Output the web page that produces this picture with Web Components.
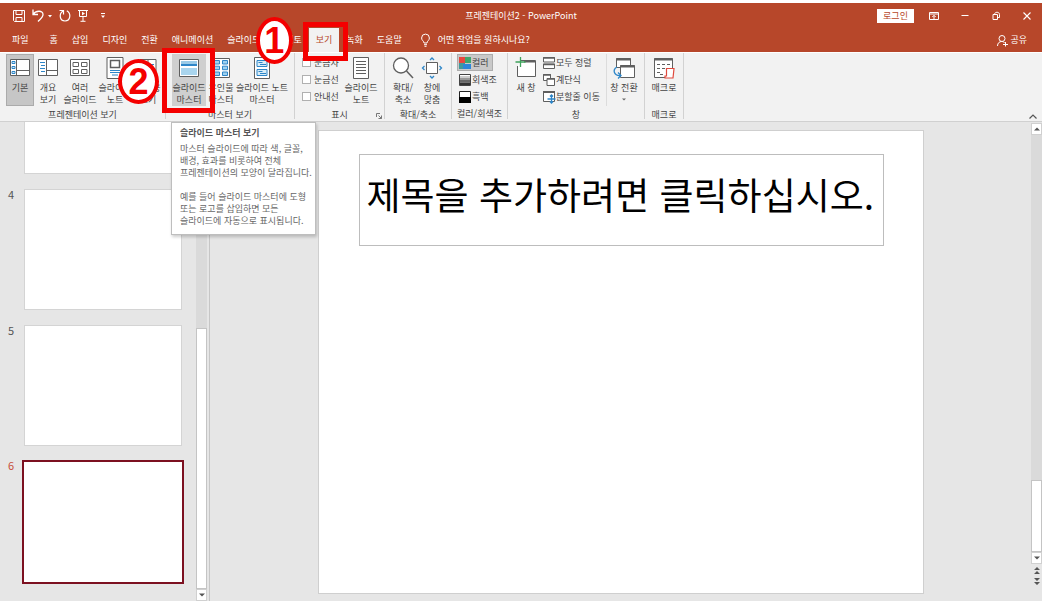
<!DOCTYPE html>
<html lang="ko">
<head>
<meta charset="utf-8">
<title>프레젠테이션2 - PowerPoint</title>
<style>
  html, body { margin: 0; height: 100%; }
  body {
    font: 9px/12px "Noto Sans CJK KR", "Noto Sans", sans-serif;
    color: #444; background: #fff;
    --brand: #b7472a; --ribbon: #f2f2f2; --canvas: #e6e6e6; --line: #c6c6c6; --mark: #f40000;
  }
</style>
</head>
<body>
<ppt-window>
  <title-bar slot="title" heading="프레젠테이션2 - PowerPoint"></title-bar>
  <tab-row slot="tabs">
    <ribbon-tab wide>파일</ribbon-tab>
    <ribbon-tab>홈</ribbon-tab>
    <ribbon-tab>삽입</ribbon-tab>
    <ribbon-tab>디자인</ribbon-tab>
    <ribbon-tab>전환</ribbon-tab>
    <ribbon-tab>애니메이션</ribbon-tab>
    <ribbon-tab>슬라이드 쇼</ribbon-tab>
    <ribbon-tab>검토</ribbon-tab>
    <ribbon-tab active>보기<step-mark slot="mark" class="one" number="1"></step-mark></ribbon-tab>
    <ribbon-tab>녹화</ribbon-tab>
    <ribbon-tab>도움말</ribbon-tab>
  </tab-row>

  <ribbon-bar slot="ribbon">
    <ribbon-group label="프레젠테이션 보기" style="--pad: 0 1px 0 6px">
      <big-button icon="normal" active style="--w:28px">기본</big-button>
      <big-button icon="outline" style="--w:28px">개요<br>보기</big-button>
      <big-button icon="sorter" style="--w:36px">여러<br>슬라이드</big-button>
      <big-button icon="notes" style="--w:34px">슬라이드<br>노트</big-button>
      <big-button icon="reading" style="--w:32px">읽기용<br>보기</big-button>
    </ribbon-group>
    <ribbon-group label="마스터 보기" style="--pad: 0 6px">
      <big-button icon="master" hover style="--w:34px">슬라이드<br>마스터
        <step-mark slot="over" class="two" number="2"></step-mark>
        <hover-tip slot="over" heading="슬라이드 마스터 보기">
          <span>마스터 슬라이드에 따라 색, 글꼴,<br>배경, 효과를 비롯하여 전체<br>프레젠테이션의 모양이 달라집니다.</span>
          <span slot="more">예를 들어 슬라이드 마스터에 도형<br>또는 로고를 삽입하면 모든<br>슬라이드에 자동으로 표시됩니다.</span>
        </hover-tip>
      </big-button>
      <big-button icon="handout" style="--w:30px">유인물<br>마스터</big-button>
      <big-button icon="notesmaster" style="--w:52px">슬라이드 노트<br>마스터</big-button>
    </ribbon-group>
    <ribbon-group label="표시" launcher style="--pad: 0 5px 0 7px">
      <stack-col style="--w:41px">
        <check-item>눈금자</check-item>
        <check-item>눈금선</check-item>
        <check-item>안내선</check-item>
      </stack-col>
      <big-button icon="page" style="--w:36px">슬라이드<br>노트</big-button>
    </ribbon-group>
    <ribbon-group label="확대/축소" style="--pad: 0 5px 0 3px">
      <big-button icon="zoom" style="--w:30px">확대/<br>축소</big-button>
      <big-button icon="fit" style="--w:28px">창에<br>맞춤</big-button>
    </ribbon-group>
    <ribbon-group label="컬러/회색조" style="--pad: 0 5px">
      <stack-col style="--w:45px">
        <small-button icon="color" active>컬러</small-button>
        <small-button icon="gray">회색조</small-button>
        <small-button icon="bw">흑백</small-button>
      </stack-col>
    </ribbon-group>
    <ribbon-group label="창" style="--pad: 0 3px">
      <big-button icon="newwin" style="--w:30px">새 창</big-button>
      <stack-col divided style="--w:66px">
        <small-button icon="arrange">모두 정렬</small-button>
        <small-button icon="cascade">계단식</small-button>
        <small-button icon="split">분할줄 이동</small-button>
      </stack-col>
      <big-button icon="switch" caret style="--w:34px">창 전환</big-button>
    </ribbon-group>
    <ribbon-group label="매크로" style="--pad: 0">
      <big-button icon="macro" style="--w:38px">매크로</big-button>
    </ribbon-group>
  </ribbon-bar>

  <thumb-pane slot="pane">
    <slide-thumb number="3"></slide-thumb>
    <slide-thumb number="4"></slide-thumb>
    <slide-thumb number="5"></slide-thumb>
    <slide-thumb number="6" selected></slide-thumb>
  </thumb-pane>
  <slide-stage slot="stage">제목을 추가하려면 클릭하십시오.</slide-stage>
</ppt-window>

<script>
const G = '#5f5f5f', B = '#2e86c8';
const ICONS = {
  save: [12, 12, '<g fill="none" stroke="#fff"><path d="M.5.5h11v11H1.500L.5 10.500z"/><path d="M3 .5v4h6v-4M3 11.500v-4h6v4"/></g>'],
  undo: [12, 13, '<path d="M1 .5v5h5M1 5.500C3.500 1.500 11 .8 11 5.500c0 2.800-2.200 4.200-5 7" fill="none" stroke="#fff" stroke-width="1.300"/>'],
  redo: [12, 13, '<path d="M.5 1.500h4v4M4.500 1.700C-.5 4.500.5 12 6 12s6.500-7.500 1.800-10.300" fill="none" stroke="#fff" stroke-width="1.200"/>'],
  show: [10, 13, '<path d="M0 1.500h10M1.500 1.500v6h7v-6M5 7.500v4.500M2.500 12.300h5" fill="none" stroke="#fff"/><path d="M4 2.800l3 1.800-3 1.800z" fill="#fff"/>'],
  tiny: [4, 4, '<path d="M0 1h4L2 3.500z" fill="#fff"/>'],
  more: [4, 6, '<path d="M0 0h4v1H0zM0 2.500h4L2 5z" fill="#fff"/>'],
  display: [10, 8, '<path d="M.5.5h9v7h-9zM.5 2h9M5 7V3.500M3.300 5L5 3.300 6.700 5" fill="none" stroke="#fff"/>'],
  min: [8, 8, '<path d="M.5 3.500h7" stroke="#fff"/>'],
  restore: [8, 8, '<path d="M1 2.500h4.500v5H1zM2.500 2.500c0-3 5-3 5 0v3h-2" fill="none" stroke="#fff"/>'],
  close: [8, 8, '<path d="M.5.5l7 7M7.500.5l-7 7" stroke="#fff" stroke-width="1.100"/>'],
  bulb: [9, 13, '<path d="M3 9c0-2-2.400-2.500-2.400-5a3.900 3.900 0 0 1 7.800 0C8.400 6.500 6 7 6 9zM3 10.700h3M3.500 12.300h2" fill="none" stroke="#fff"/>'],
  person: [11, 11, '<circle cx="5" cy="3.500" r="3" fill="none" stroke="#fff"/><path d="M.5 11c0-3 2-4.500 4-4.500 1.500 0 2.500.5 3.300 1.500M6 9.500h5M8.500 7v4.500" fill="none" stroke="#fff"/>'],
  normal: [22, 20, `<path d="M1.500 1.500h19v16h-19z" fill="#fff" stroke="${G}"/><path d="M7.500 1.500v16M7.500 12.500h13" stroke="${G}"/><path d="M3 3.500h3v2H3zM3 8.500h3v2H3zM3 13.500h3v2H3z" fill="#cfe7f6" stroke="${B}"/>`],
  outline: [22, 20, `<path d="M1.500 1.500h19v16h-19z" fill="#fff" stroke="${G}"/><path d="M9.500 1.500v16M9.500 12.500h11" stroke="${G}"/><path d="M3 4.500h5M4 7.500h4M3 10.500h5M4 13.500h4" stroke="${B}"/>`],
  sorter: [22, 20, `<path d="M1.500 1.500h19v16h-19z" fill="#fff" stroke="${G}"/><path d="M4 4.500h5.500v4H4zM12.500 4.500H18v4h-5.500zM4 11.500h5.500v4H4zM12.500 11.500H18v4h-5.500z" fill="none" stroke="${G}"/>`],
  notes: [22, 22, `<path d="M3 .5h16v21H3z" fill="#fff" stroke="${G}"/><path d="M6.500 3.500h9v7h-9z" fill="none" stroke="${G}" stroke-width="1.500"/><path d="M6 13.500h10M6 15.500h10M8 18h6" stroke="${B}"/>`],
  reading: [22, 20, `<path d="M3 1.500h16v16H3z" fill="#fff" stroke="${G}"/><path d="M11 2v15" stroke="${G}"/><path d="M13 6.500h4M13 9.500h4" stroke="${B}"/>`],
  master: [22, 20, `<path d="M1.500 1.500h19v17h-19z" fill="#fff" stroke="${G}"/><path d="M3 3h16v3H3z" fill="#9bcbe8"/><path d="M3 6h16v2H3z" fill="${B}"/><path d="M3 10h16v7H3z" fill="#a9d5ee"/>`],
  handout: [18, 20, `<path d="M.5.5h17v19H.5z" fill="#fff" stroke="${G}"/><g fill="#9dd0ef" stroke="${B}"><path d="M2.500 2.500h5v3.500h-5zM10.500 2.500h5v3.500h-5zM2.500 8.200h5v3.500h-5zM10.500 8.200h5v3.500h-5zM2.500 14h5v3.500h-5zM10.500 14h5v3.500h-5z"/></g>`],
  notesmaster: [18, 22, `<path d="M1.500.5h15v21h-15z" fill="#fff" stroke="${G}"/><path d="M4 3.500h10v6H4zM4 12.500h10v6H4z" fill="#d8edf8" stroke="${B}"/><path d="M5.500 5.500h4M7 7.500h6M5.500 14.500h4M7 16.500h6" stroke="${B}"/>`],
  page: [18, 22, `<path d="M1.500.5h15v21h-15z" fill="#fff" stroke="${G}"/><path d="M4 4.500h10M4 7.500h10M4 10.500h10M4 13.500h10M4 16.500h10" stroke="${G}"/>`],
  zoom: [22, 22, `<circle cx="9" cy="8.500" r="7.500" fill="#fff" stroke="${G}" stroke-width="1.300"/><path d="M14.500 14l6.500 7" stroke="${G}" stroke-width="1.500"/>`],
  fit: [20, 22, `<path d="M4.500 5.500h11v11h-11z" fill="#fff" stroke="${G}"/><path d="M8 3l2-2 2 2M8 19l2 2 2-2M2.500 9L.5 11l2 2M17.500 9l2 2-2 2" fill="none" stroke="${B}" stroke-width="1.300"/>`],
  color: [12, 12, '<path d="M0 0h6v6H0z" fill="#e8473f"/><path d="M6 0h6v6H6z" fill="#3fa66b"/><path d="M0 6h6v6H0z" fill="#3f9a9a"/><path d="M4 7h8v5H4z" fill="#2b86d8"/>'],
  gray: [12, 12, '<path d="M.5.5h11v11H.5z" fill="#fff" stroke="#444"/><path d="M1 2h10v2H1z" fill="#ccc"/><path d="M1 4h10v2H1z" fill="#999"/><path d="M1 6h10v2.500H1z" fill="#666"/><path d="M1 8.500h10V11H1z" fill="#333"/>'],
  bw: [12, 12, '<path d="M.5.5h11v11H.5z" fill="#fff" stroke="#222"/><path d="M0 6h12v6H0z" fill="#000"/>'],
  newwin: [22, 22, `<path d="M6 3.500h14.500v16H2.500V9" fill="#fff" stroke="${G}"/><path d="M9 4.500h11" stroke="${G}" stroke-width="2"/><path d="M5.500 0v10M.5 5h10" stroke="#3fa35c" stroke-width="1.300"/>`],
  arrange: [12, 12, `<path d="M.5.500h11v4.500H.5zM.5 7h11v4.500H.5z" fill="#fff" stroke="${G}"/><path d="M0 1h12M0 7.500h12" stroke="${G}" stroke-width="1.500"/>`],
  cascade: [12, 12, `<path d="M.5.500h7v6h-7z" fill="#fff" stroke="${G}"/><path d="M4 4.500h7.500v7H4z" fill="#fff" stroke="${G}"/><path d="M0 1h8M4 5h8" stroke="${G}" stroke-width="1.500"/>`],
  split: [12, 12, `<path d="M.5.500h11v10H.5z" fill="#fff" stroke="${G}"/><path d="M0 1h12" stroke="${G}" stroke-width="2"/><path d="M8.500 4v8M4.500 8h8M7 5.500L8.500 4 10 5.500M7 10.500L8.500 12l1.500-1.500" fill="none" stroke="${B}" stroke-width="1.300"/>`],
  switch: [22, 22, `<path d="M3.500 1.500h14v9h-14z" fill="#fff" stroke="${G}"/><path d="M3 2.500h15" stroke="${G}" stroke-width="2"/><path d="M7.500 8.500h14v12h-14z" fill="#fff" stroke="${G}"/><path d="M7 9.500h15" stroke="${G}" stroke-width="2"/><path d="M4 10c-5 3-3 9 3.500 8.500M5 15.500l3 3-3 3" fill="none" stroke="${B}" stroke-width="1.300"/>`],
  macro: [22, 22, `<path d="M1.500 1.500h18v19h-18z" fill="#fff" stroke="${G}"/><path d="M1 2.500h19" stroke="${G}" stroke-width="2"/><path d="M4 7.500h3M9 7.500h3M14 7.500h3M4 11.500h3M9 11.500h3M4 15.500h3M7 17.500h3" stroke="${G}"/><path d="M13.500 11.500h7.500l-1 9.500h-8v-2h1.500z" fill="#fff" stroke="#e04a3e" stroke-width="1.200"/>`],
  down: [6, 4, '<path d="M0 .5h6L3 3.500z" fill="#555"/>'],
  up: [6, 4, '<path d="M0 3.500h6L3 .5z" fill="#555"/>'],
  prev: [6, 8, '<path d="M0 4h6L3 1zM0 8h6L3 5z" fill="#555"/>'],
  next: [6, 8, '<path d="M0 0h6L3 3zM0 4h6L3 7z" fill="#555"/>'],
  collapse: [8, 5, '<path d="M.5 4.500L4 1l3.500 3.500" fill="none" stroke="#555" stroke-width="1.200"/>'],
  dash: [4, 3, '<path d="M0 .5h4L2 2.500z" fill="#666"/>'],
  launch: [6, 6, '<path d="M.5 4V.5H4M2.500 2.500l3 3M5.500 2.500v3h-3" fill="none" stroke="#777"/>']
};

const RESET = `button{font:inherit;color:inherit;background:none;border:0;margin:0;padding:0;display:flex;align-items:center;justify-content:center}`;

/* Registers an element whose shadow root is built from css and a markup function. */
function element(name, css, markup) {
  customElements.define(name, class extends HTMLElement {
    constructor() {
      super();
      this.attachShadow({ mode: 'open' });
    }
    connectedCallback() {
      const t = document.createElement('template');
      t.innerHTML = `<style>*{box-sizing:border-box}${RESET}${css}</style>${markup(this)}`;
      this.shadowRoot.replaceChildren(t.content.cloneNode(true));
    }
  });
}
const attr = (el, n) => el.getAttribute(n) || '';
const icon = n => `<ui-icon name="${n}"></ui-icon>`;

element('ui-icon', `:host{display:block;flex:none}svg{display:block;overflow:visible}`, el => {
  const [w, h, body] = ICONS[attr(el, 'name')];
  return `<svg width="${w}" height="${h}" viewBox="0 0 ${w} ${h}" aria-hidden="true">${body}</svg>`;
});

element('ppt-window', `
  :host{display:flex;flex-direction:column;height:100vh;box-sizing:border-box;padding:3px 4px 4px 0}
  header{background:var(--brand);color:#fff;flex:none}
  main{flex:1;min-height:0;display:flex;background:var(--canvas);border-top:1px solid #d0d0d0}
  .stage{display:contents}
  ::slotted([slot=stage]){flex:1}`,
  () => `<header><slot name="title"></slot><slot name="tabs"></slot></header>
    <slot name="ribbon"></slot>
    <main><slot name="pane"></slot><slot name="stage" class="stage"></slot></main>`);

element('title-bar', `
  :host{display:grid;grid-template-columns:1fr auto 1fr;align-items:center;height:25px}
  .quick{display:flex;align-items:center;gap:7px;padding-left:13px}
  .undo{display:flex;align-items:center;gap:4px}
  .last{margin-left:6px}
  .right{display:flex;align-items:center;justify-content:flex-end}
  .right button{width:31px;height:14px}
  .right .login{background:#fff;color:var(--brand);width:37px;margin-right:4px}`,
  el => `<div class="quick"><button aria-label="저장">${icon('save')}</button>
      <div class="undo"><button aria-label="실행 취소">${icon('undo')}</button><button aria-label="목록">${icon('tiny')}</button></div>
      <button aria-label="다시 실행">${icon('redo')}</button><button aria-label="쇼 시작">${icon('show')}</button>
      <button class="last" aria-label="사용자 지정">${icon('more')}</button></div>
    <div>${attr(el, 'heading')}</div>
    <div class="right"><button class="login">로그인</button>
      <button aria-label="리본 표시 옵션">${icon('display')}</button><button aria-label="최소화">${icon('min')}</button>
      <button aria-label="이전 크기로">${icon('restore')}</button><button aria-label="닫기">${icon('close')}</button></div>`);

element('tab-row', `
  :host{display:flex;height:24px;align-items:stretch;padding-left:5px}
  .tell{gap:8px;margin-left:12px}
  .share{gap:2px;margin-left:auto;padding-right:15px}`,
  () => `<slot></slot><button class="tell">${icon('bulb')}<span>어떤 작업을 원하시나요?</span></button>
    <button class="share">${icon('person')}<span>공유</span></button>`);

element('ribbon-tab', `
  :host{display:block;position:relative;white-space:nowrap}
  button{height:100%;padding:0 7px}
  :host([wide]){margin-right:7px}
  :host([active]) button{background:var(--ribbon);color:var(--brand)}`,
  () => `<button role="tab"><slot></slot></button><slot name="mark"></slot>`);

element('ribbon-bar', `
  :host{display:flex;height:69px;background:var(--ribbon);border-top:1px solid #fff;box-sizing:border-box;flex:none}
  .fold{margin:auto 5px 2px auto}`,
  () => `<slot></slot><button class="fold" aria-label="리본 축소">${icon('collapse')}</button>`);

element('ribbon-group', `
  :host{display:flex;flex-direction:column;position:relative;border-right:1px solid #d2d2d2;margin-bottom:2px;padding-top:1px;flex:none}
  .body{display:flex;height:52px;padding:var(--pad)}
  .label{text-align:center;white-space:nowrap;line-height:12px;padding-top:3px}
  .launch{position:absolute;right:2px;bottom:0}`,
  el => `<div class="body"><slot></slot></div><div class="label">${attr(el, 'label')}</div>
    ${el.hasAttribute('launcher') ? `<button class="launch" aria-label="자세히">${icon('launch')}</button>` : ''}`);

element('big-button', `
  :host{display:block;position:relative;width:var(--w);flex:none;white-space:nowrap}
  button{width:100%;height:52px;flex-direction:column;justify-content:flex-start}
  .pic{height:28px;display:flex;align-items:center;flex:none}
  .caret{padding-top:4px}
  :host([active]) button{background:#c6c6c6;outline:1px solid #ababab;outline-offset:-1px}
  :host([hover]) button{background:#cfcfcf}`,
  el => `<button><span class="pic">${icon(attr(el, 'icon'))}</span><span><slot></slot></span>
    ${el.hasAttribute('caret') ? `<span class="caret">${icon('dash')}</span>` : ''}</button><slot name="over"></slot>`);

element('stack-col', `
  :host{display:flex;flex-direction:column;width:var(--w);flex:none;box-sizing:border-box}
  :host([divided]){border-right:1px solid #dcdcdc}`, () => `<slot></slot>`);

element('check-item', `
  :host{display:block;height:17px;white-space:nowrap}
  label{display:flex;align-items:center;gap:3px;height:17px}
  input{appearance:none;width:9px;height:9px;margin:0;background:#fff;border:1px solid #b0b0b0}`,
  () => `<label><input type="checkbox"><slot></slot></label>`);

element('small-button', `
  :host{display:block;white-space:nowrap}
  button{height:17px;gap:1px;padding:0 2px}
  :host([active]) button{background:#c9c9c9;outline:1px solid #adadad;outline-offset:-1px;padding-right:4px}`,
  el => `<button>${icon(attr(el, 'icon'))}<span><slot></slot></span></button>`);

/* Numbered callout: a red frame over the control and a numbered ring beside it. */
element('step-mark', `
  :host{position:absolute;z-index:5;pointer-events:none;color:var(--mark)}
  :host(.one){left:-6px;top:-6px;width:45px;height:39px;--ring:-47px;--rise:-5px;--rw:37px;--rh:47px}
  :host(.two){left:-10px;top:-6px;width:53px;height:65px;--ring:-44px;--rise:11px;--rw:41px;--rh:45px}
  .frame{width:100%;height:100%;border:5px solid var(--mark)}
  .ring{position:absolute;left:var(--ring);top:var(--rise);width:var(--rw);height:var(--rh);
    border:4px solid var(--mark);border-radius:50%;background:#fff;
    display:flex;align-items:center;justify-content:center;font:bold 36px/36px "Liberation Sans",sans-serif}`,
  el => `<div class="frame"></div><div class="ring">${attr(el, 'number')}</div>`);

element('hover-tip', `
  :host{display:block;position:absolute;z-index:4;left:-1px;top:68px;width:145px;box-sizing:border-box;
    background:#fff;border:1px solid #bebebe;box-shadow:1px 2px 3px #0003;padding:4px 7px 7px 8px;color:#666;white-space:nowrap}
  strong{display:block;color:#555;margin-bottom:4px}
  p{margin:0}
  p + p{margin-top:12px}`,
  el => `<strong>${attr(el, 'heading')}</strong><p><slot></slot></p><p><slot name="more"></slot></p>`);

element('scroll-rail', `
  :host{display:flex;flex-direction:column;width:11px;flex:none}
  .track{flex:1;background:#dadada;display:flex;flex-direction:column}
  .before{flex:var(--before)}
  .thumb{flex:var(--size);background:#fff;border:1px solid #c4c4c4}
  button{width:100%;height:12px;background:#fff;border:1px solid #d0d0d0;flex:none}
  .bare{background:none;border:0}`,
  el => `${el.hasAttribute('pages') ? `<button aria-label="위로">${icon('up')}</button>` : ''}
    <div class="track"><div class="before"></div><div class="thumb"></div></div>
    <button aria-label="아래로">${icon('down')}</button>
    ${el.hasAttribute('pages') ? `<button class="bare" aria-label="이전 슬라이드">${icon('prev')}</button><button class="bare" aria-label="다음 슬라이드">${icon('next')}</button>` : ''}`);

element('thumb-pane', `
  :host{display:flex;width:210px;box-sizing:border-box;flex:none;border-right:1px solid var(--line);padding-right:2px}
  .list{flex:1;display:flex;flex-direction:column;justify-content:flex-end;gap:15px;overflow:hidden;padding-bottom:17px}
  scroll-rail{--before:207;--size:261}`,
  () => `<div class="list"><slot></slot></div><scroll-rail></scroll-rail>`);

element('slide-thumb', `
  :host{display:flex;flex:none;font-size:11px;color:#555}
  .n{width:24px;padding-left:8px;box-sizing:border-box;flex:none;line-height:10px}
  .s{width:158px;height:121px;background:#fff;border:1px solid #d4d4d4}
  :host([selected]){color:#c8503c;margin-top:-1px}
  :host([selected]) .n{width:22px}
  :host([selected]) .s{width:162px;height:124px;border:2px solid #7c1020}`,
  el => `<div class="n">${attr(el, 'number')}</div><div class="s"></div>`);

element('slide-stage', `
  :host{display:flex;min-width:0}
  .area{flex:1;display:flex;justify-content:center;padding:8px 0 7px}
  .slide{height:100%;aspect-ratio:606/464;background:#fff;border:1px solid #cfcfcf;padding:23px 39px 0 40px}
  h1{margin:0;border:1px solid #bdbdbd;padding:12px 7px 24px;font-size:37px;line-height:54px;font-weight:400;color:#000;white-space:nowrap}
  scroll-rail{--before:346;--size:70;padding-bottom:13px;padding-top:1px}`,
  () => `<div class="area"><div class="slide"><h1><slot></slot></h1></div></div><scroll-rail pages></scroll-rail>`);
</script>
</body>
</html>
